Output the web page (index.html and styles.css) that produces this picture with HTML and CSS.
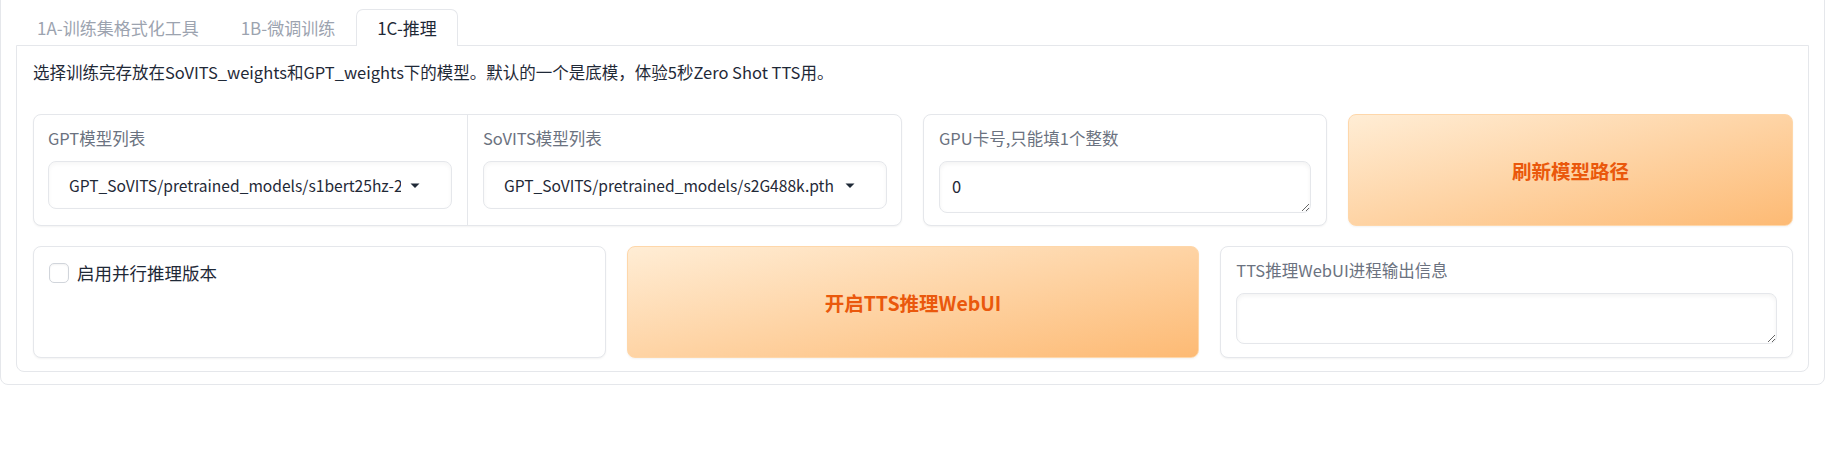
FILE: index.html
```html
<!DOCTYPE html>
<html lang="zh">
<head>
<meta charset="utf-8">
<title>GPT-SoVITS WebUI</title>
<link rel="stylesheet" href="styles.css">
</head>
<body>
<div class="outer">
  <div class="tabnav">
    <button class="tab">1A-训练集格式化工具</button>
    <button class="tab">1B-微调训练</button>
    <button class="tab selected">1C-推理</button>
  </div>
  <div class="panel">
    <p class="desc">选择训练完存放在SoVITS_weights和GPT_weights下的模型。默认的一个是底模，体验5秒Zero Shot TTS用。</p>
    <div class="row row1">
      <div class="block group">
        <div class="col">
          <span class="label">GPT模型列表</span>
          <div class="dropdown">
            <span class="dd-value">GPT_SoVITS/pretrained_models/s1bert25hz-2kh-longer-epoch=68e-step=50232.ckpt</span>
            <svg class="dd-arrow" width="18" height="18" viewBox="0 0 18 18"><path d="M4.5 7.5l4.5 4.5 4.5-4.5z"/></svg>
          </div>
        </div>
        <div class="col divided">
          <span class="label">SoVITS模型列表</span>
          <div class="dropdown">
            <span class="dd-value">GPT_SoVITS/pretrained_models/s2G488k.pth</span>
            <svg class="dd-arrow" width="18" height="18" viewBox="0 0 18 18"><path d="M4.5 7.5l4.5 4.5 4.5-4.5z"/></svg>
          </div>
        </div>
      </div>
      <div class="block field">
        <span class="label">GPU卡号,只能填1个整数</span>
        <textarea class="textbox" rows="1">0</textarea>
      </div>
      <button class="primary">刷新模型路径</button>
    </div>
    <div class="row row2">
      <div class="block check">
        <label class="check-label"><span class="checkbox"></span><span>启用并行推理版本</span></label>
      </div>
      <button class="primary">开启TTS推理WebUI</button>
      <div class="block field">
        <span class="label">TTS推理WebUI进程输出信息</span>
        <textarea class="textbox" rows="1"></textarea>
      </div>
    </div>
  </div>
</div>
</body>
</html>
```

FILE: styles.css
```css
* { box-sizing: border-box; }

html, body {
  margin: 0;
  padding: 0;
  background: #ffffff;
  font-family: "Noto Sans CJK SC", "Source Sans Pro", sans-serif;
  color: #1f2937;
}

.outer {
  margin: -10px 10px 0 0;
  border: 1px solid #e5e7eb;
  border-radius: 8px;
  padding: 18px 15px 12px 15px;
}

.tabnav {
  display: flex;
  height: 36px;
}

.tab {
  font-family: inherit;
  font-size: 17px;
  color: #9ca3af;
  background: transparent;
  border: 1px solid transparent;
  border-bottom: none;
  padding: 0 20px;
  height: 37px;
  line-height: 34px;
  border-radius: 7px 7px 0 0;
  cursor: pointer;
}

.tab.selected {
  color: #1f2937;
  background: #ffffff;
  border-color: #e5e7eb;
  position: relative;
  z-index: 1;
}

.panel {
  border: 1px solid #e5e7eb;
  border-radius: 0 0 8px 8px;
  padding: 14px 15px 13px 16px;
}

.desc {
  margin: 0;
  font-size: 16.5px;
  line-height: 25px;
  color: #1f2937;
}

.row {
  display: grid;
  gap: 21px;
  height: 112px;
}

.row1 {
  margin-top: 29px;
  grid-template-columns: 869px 404px 1fr;
}

.row2 {
  margin-top: 20px;
  grid-template-columns: 1fr 1fr 1fr;
}

.block {
  border: 1px solid #e5e7eb;
  border-radius: 8px;
  background: #ffffff;
  box-shadow: 0 1px 2px rgba(0, 0, 0, 0.05);
  min-width: 0;
}

.group {
  display: flex;
}

.col {
  flex: 1 1 0;
  min-width: 0;
  padding: 11px 15px 0 14px;
  display: flex;
  flex-direction: column;
}

.col.divided {
  border-left: 1px solid #e5e7eb;
  padding-left: 15px;
  padding-right: 14px;
}

.label {
  display: block;
  font-size: 16.5px;
  line-height: 25px;
  color: #6b7280;
  margin-bottom: 10px;
}

.dropdown {
  display: flex;
  align-items: center;
  min-width: 0;
  height: 48px;
  border: 1px solid #e5e7eb;
  border-radius: 8px;
  box-shadow: inset 0 2px 4px rgba(0, 0, 0, 0.04);
  padding: 0 27px 0 20px;
  font-size: 15.6px;
  color: #1f2937;
}

.dd-value {
  flex: 1 1 auto;
  min-width: 0;
  overflow: hidden;
  white-space: nowrap;
}

.dd-arrow {
  flex: 0 0 auto;
  margin-left: 5px;
  fill: #1f2937;
}

.field {
  padding: 11px 15px 0 15px;
}

.textbox {
  display: block;
  width: 100%;
  height: 52px;
  margin: 0;
  border: 1px solid #e5e7eb;
  border-radius: 8px;
  box-shadow: inset 0 2px 4px rgba(0, 0, 0, 0.05);
  padding: 12px 12px;
  font-family: inherit;
  font-size: 16.5px;
  line-height: 24px;
  color: #1f2937;
  resize: vertical;
  outline: none;
}

.row2 .textbox {
  height: 51px;
}

.primary {
  font-family: inherit;
  font-size: 19.5px;
  font-weight: 700;
  color: #ea580c;
  border: 1px solid #fed7aa;
  border-radius: 8px;
  background: linear-gradient(to bottom right, #ffedd5, #fdba74);
  box-shadow: 0 1px 2px rgba(0, 0, 0, 0.05);
  cursor: pointer;
}

.check {
  padding: 13px 15px 0 15px;
}

.check-label {
  display: flex;
  align-items: center;
  gap: 8px;
  font-size: 17.5px;
  line-height: 26px;
  color: #1f2937;
}

.checkbox {
  width: 20px;
  height: 20px;
  border: 1px solid #d1d5db;
  border-radius: 5px;
  background: #ffffff;
  box-shadow: inset 0 1px 2px rgba(0, 0, 0, 0.05);
}
```
